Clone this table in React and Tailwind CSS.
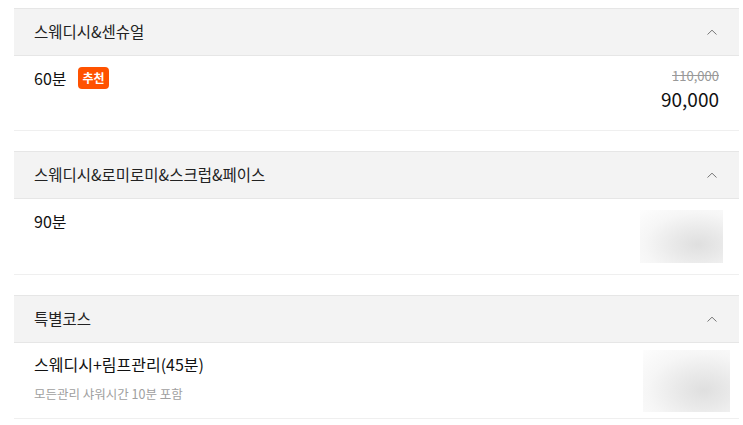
import React from "react";

function Chevron() {
  return (
    <svg width="12" height="8" viewBox="0 0 12 8" fill="none" className="block">
      <path d="M1.5 6.5 L6 2.2 L10.5 6.5" stroke="#777" strokeWidth="1" />
    </svg>
  );
}

function Header({ title }) {
  return (
    <div className="flex h-[48px] items-center justify-between border-y border-[#e6e6e6] bg-[#f3f3f3] pl-5 pr-[21px]">
      <span className="text-[15.5px] text-[#222]">{title}</span>
      <Chevron />
    </div>
  );
}

function Blur({ w, h }) {
  return (
    <div className="overflow-hidden bg-[#fbfbfb]" style={{ width: w, height: h }}>
      <div className="h-full w-full bg-[radial-gradient(ellipse_at_70%_65%,#dfdfdf_0%,#e9e9e9_30%,#f6f6f6_65%,#fdfdfd_100%)]" />
    </div>
  );
}

export default function App() {
  return (
    <div
      className="min-h-[425px] bg-white pt-2 pl-[14px] pr-1"
      style={{ fontFamily: '"Noto Sans CJK KR", "Noto Sans", sans-serif' }}
    >
      <div className="w-[725px]">
        <Header title="스웨디시&센슈얼" />
        <div className="flex h-[75px] justify-between border-b border-[#efefef] pl-5 pr-5">
          <div className="flex items-start gap-3 pt-[10px]">
            <span className="text-[16px] leading-[24px] text-[#111]">60분</span>
            <span className="mt-[1px] rounded-[4px] bg-[#ff5200] px-[4px] text-[12px] font-semibold leading-[22px] text-white">
              추천
            </span>
          </div>
          <div className="flex flex-col items-end pt-[11px]">
            <span className="text-[13px] leading-[18px] text-[#999] line-through">110,000</span>
            <span className="text-[19px] leading-[28px] text-[#111]">90,000</span>
          </div>
        </div>

        <div className="h-[20px]" />
        <Header title="스웨디시&로미로미&스크럽&페이스" />
        <div className="flex h-[76px] justify-between border-b border-[#efefef] pl-5 pr-4">
          <div className="pt-[10px]">
            <span className="text-[16px] leading-[24px] text-[#111]">90분</span>
          </div>
          <div className="pt-[11px]">
            <Blur w={83} h={53} />
          </div>
        </div>

        <div className="h-[20px]" />
        <Header title="특별코스" />
        <div className="flex h-[76px] justify-between border-b border-[#efefef] pl-5 pr-[9px]">
          <div className="flex flex-col pt-[9px]">
            <span className="text-[16px] leading-[24px] text-[#111]">스웨디시+림프관리(45분)</span>
            <span className="mt-[9px] text-[12.5px] leading-[18px] text-[#a0a0a0]">모든관리 샤워시간 10분 포함</span>
          </div>
          <div className="pt-[7px]">
            <Blur w={87} h={62} />
          </div>
        </div>
      </div>
    </div>
  );
}
